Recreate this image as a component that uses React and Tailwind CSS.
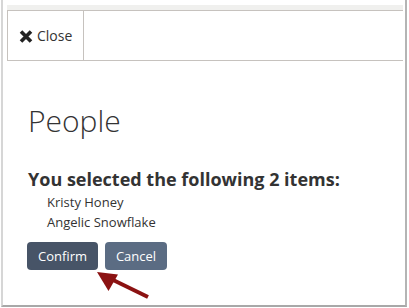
import React from "react";

export default function App() {
  return (
    <div className="relative w-[409px] h-[308px] bg-white overflow-hidden" style={{ fontFamily: "'Open Sans', sans-serif" }}>
      <div className="ml-px w-[406px] h-[307px] border-l-2 border-r-2 border-b-2 border-l-[#d6d6d6] border-r-[#b4b4b4] border-b-[#a8a8a8]">
        <div className="pl-[4px] pr-[2px] pt-[5px]">
          <div className="h-[5px] bg-[#f0f0ee]" />
          <div className="h-[51px] border-t border-b border-[#c6c2be] flex">
            <div className="w-[77px] border-l border-r border-[#c6c2be] flex items-center pl-[11px] gap-[4px] text-[14px] text-[#333]">
              <svg width="14" height="13" viewBox="0 0 14 13" className="mt-[1px]">
                <path d="M2 1.5 L12 11.5 M12 1.5 L2 11.5" stroke="#222" strokeWidth="3.6" strokeLinecap="butt" />
              </svg>
              <span className="leading-[20px]">Close</span>
            </div>
          </div>
        </div>
        <div className="pl-[25px]">
          <h2 className="mt-[42px] text-[30px] leading-[36px] font-light text-[#333]">People</h2>
          <div className="mt-[28px] text-[18px] leading-[24px] font-bold text-[#333]">You selected the following 2 items:</div>
          <div className="mt-px pl-[19px] text-[13px] leading-[20px] text-[#333]">
            <div>Kristy Honey</div>
            <div>Angelic Snowflake</div>
          </div>
          <div className="mt-[10px] flex gap-[7px] -ml-px">
            <button className="w-[71px] h-[28px] rounded-[4px] bg-[#475467] text-white text-[13px] leading-[28px] text-center">Confirm</button>
            <button className="w-[62px] h-[28px] rounded-[4px] bg-[#5b6c83] text-white text-[13px] leading-[28px] text-center">Cancel</button>
          </div>
        </div>
      </div>
      <svg className="absolute left-0 top-0 pointer-events-none" width="409" height="308">
        <line x1="148" y1="297" x2="108" y2="277.5" stroke="#8b1212" strokeWidth="4" />
        <polygon points="97,272 118,274.5 108.5,291" fill="#8b1212" />
      </svg>
    </div>
  );
}
